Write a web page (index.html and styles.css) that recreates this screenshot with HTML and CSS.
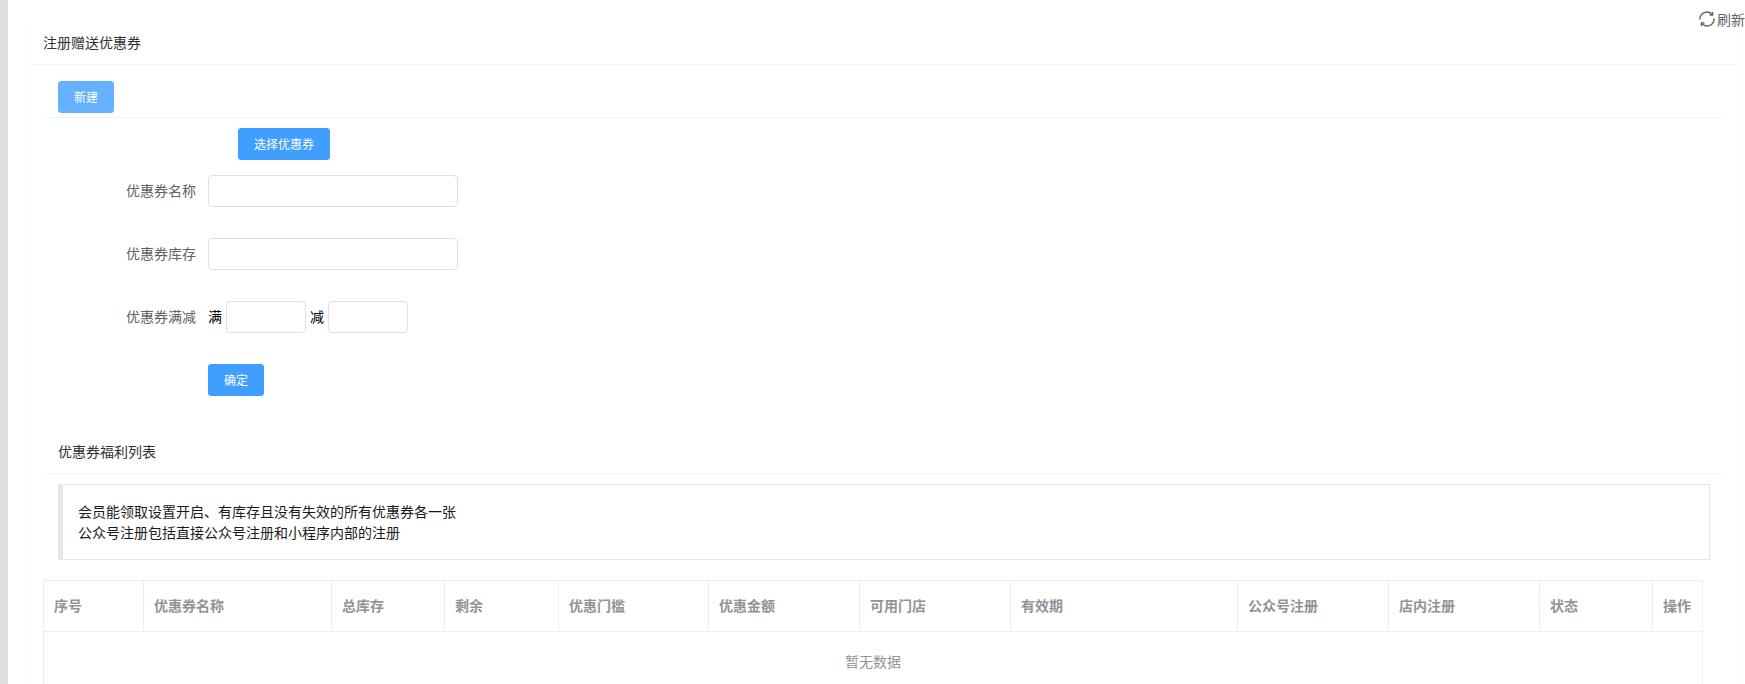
FILE: index.html
```html
<!DOCTYPE html>
<html lang="zh-CN">
<head>
<meta charset="utf-8">
<title>注册赠送优惠券</title>
<link rel="stylesheet" href="styles.css">
</head>
<body>
<div class="app">
  <aside class="rail"></aside>
  <main class="main">
    <div class="topbar">
      <a class="refresh">
        <svg class="refresh-icon" viewBox="0 0 16 16" fill="none" stroke="#606266" stroke-width="1.4">
          <path d="M1 8.5A7 7 0 0 1 13 3.2"/>
          <path d="M15 7.5A7 7 0 0 1 3 12.8"/>
          <path d="M13.6 1v3h-3" />
          <path d="M2.4 15v-3h3" />
        </svg>
        <span>刷新</span>
      </a>
    </div>
    <section class="card">
      <header class="card-head">注册赠送优惠券</header>
      <div class="card-body">
        <div class="toolbar"><button class="btn btn-light">新建</button></div>
        <div class="picker"><button class="btn">选择优惠券</button></div>
        <form class="form">
          <div class="row"><label class="label">优惠券名称</label><input class="input"></div>
          <div class="row"><label class="label">优惠券库存</label><input class="input"></div>
          <div class="row">
            <label class="label">优惠券满减</label>
            <span class="unit">满</span><input class="input input-sm">
            <span class="unit unit-next">减</span><input class="input input-sm">
          </div>
          <div class="row"><span class="label"></span><button type="button" class="btn">确定</button></div>
        </form>
        <h3 class="sub-title">优惠券福利列表</h3>
        <div class="notice">
          <p>会员能领取设置开启、有库存且没有失效的所有优惠券各一张</p>
          <p>公众号注册包括直接公众号注册和小程序内部的注册</p>
        </div>
        <table class="table">
          <colgroup>
            <col class="c100"><col class="c188"><col class="c113"><col class="c114"><col class="c150">
            <col class="c151"><col class="c151"><col class="c227"><col class="c151"><col class="c151">
            <col class="c113"><col class="c50">
          </colgroup>
          <thead>
            <tr>
              <th>序号</th><th>优惠券名称</th><th>总库存</th><th>剩余</th><th>优惠门槛</th><th>优惠金额</th>
              <th>可用门店</th><th>有效期</th><th>公众号注册</th><th>店内注册</th><th>状态</th><th>操作</th>
            </tr>
          </thead>
          <tbody>
            <tr><td colspan="12" class="empty">暂无数据</td></tr>
          </tbody>
        </table>
      </div>
    </section>
  </main>
</div>
</body>
</html>
```
FILE: styles.css
```css
* { box-sizing: border-box; }
html, body {
  margin: 0;
  height: 684px;
  overflow: hidden;
  background: #fff;
  font-family: "Noto Sans CJK SC", "Liberation Sans", sans-serif;
  font-size: 14px;
  color: #303133;
}
.app { display: flex; height: 684px; overflow: hidden; }
.rail { flex: 0 0 8px; background: #dedfe0; }
.main { flex: 1; min-width: 0; }
.topbar {
  height: 23px;
  display: flex;
  justify-content: flex-end;
  padding-top: 10px;
}
.refresh {
  display: flex;
  align-items: center;
  gap: 2px;
  height: 18px;
  color: #606266;
  line-height: 18px;
}
.refresh-icon { width: 16px; height: 16px; }
.card {
  margin: 0 5px 0 20px;
  border: 1px solid #fafafa;
  border-top-color: #fff;
  background: #fff;
}
.card-head {
  height: 41px;
  line-height: 36px;
  padding-left: 14px;
  border-bottom: 1px solid #f2f3f5;
}
.card-body { padding: 0 14px; }
.toolbar {
  padding: 16px 0 3px 15px;
  border-bottom: 1px solid #f2f3f5;
  height: 53px;
}
.btn {
  display: block;
  height: 32px;
  padding: 0 15px 2px;
  border: 1px solid #409eff;
  border-radius: 3px;
  background: #409eff;
  color: #fff;
  font-family: inherit;
  font-size: 12px;
}
.btn-light { background: #66b1ff; border-color: #66b1ff; }
.picker { padding: 10px 0 0 195px; }
.form { padding-top: 15px; }
.row {
  display: flex;
  align-items: center;
  height: 32px;
  margin-bottom: 31px;
}
.label {
  flex: 0 0 165px;
  padding: 0 12px 2px 0;
  text-align: right;
  color: #606266;
}
.input {
  width: 250px;
  height: 32px;
  border: 1px solid #dcdfe6;
  border-radius: 4px;
  background: #fff;
  padding: 0 12px;
}
.input-sm { width: 80px; margin-left: 4px; }
.unit { color: #000; width: 14px; padding-bottom: 2px; }
.unit-next { margin-left: 4px; }
.sub-title {
  margin: -1px 0 0;
  height: 48px;
  padding: 0 0 0 15px;
  font-size: 14px;
  font-weight: 400;
  line-height: 50px;
  border-bottom: 1px solid #f2f3f5;
}
.notice {
  display: flex;
  flex-direction: column;
  justify-content: center;
  margin: 10px 15px 0;
  height: 76px;
  padding: 0 15px;
  border: 1px solid #e6e6e6;
  border-left: 5px solid #e6e6e6;
  color: #1a1a1a;
  line-height: 21.5px;
}
.notice p { margin: 0; }
.table {
  width: 1659px;
  margin-top: 20px;
  border-collapse: collapse;
  table-layout: fixed;
}
.table th, .table td {
  border: 1px solid #ebeef5;
  padding: 0 10px 2px;
  text-align: left;
  color: #909399;
}
.table th { height: 51px; font-weight: 700; white-space: nowrap; }
.table .empty { height: 60px; text-align: center; font-weight: 400; }
.c100 { width: 100px; }
.c188 { width: 188px; }
.c113 { width: 113px; }
.c114 { width: 114px; }
.c150 { width: 150px; }
.c151 { width: 151px; }
.c227 { width: 227px; }
.c50 { width: 50px; }
```
